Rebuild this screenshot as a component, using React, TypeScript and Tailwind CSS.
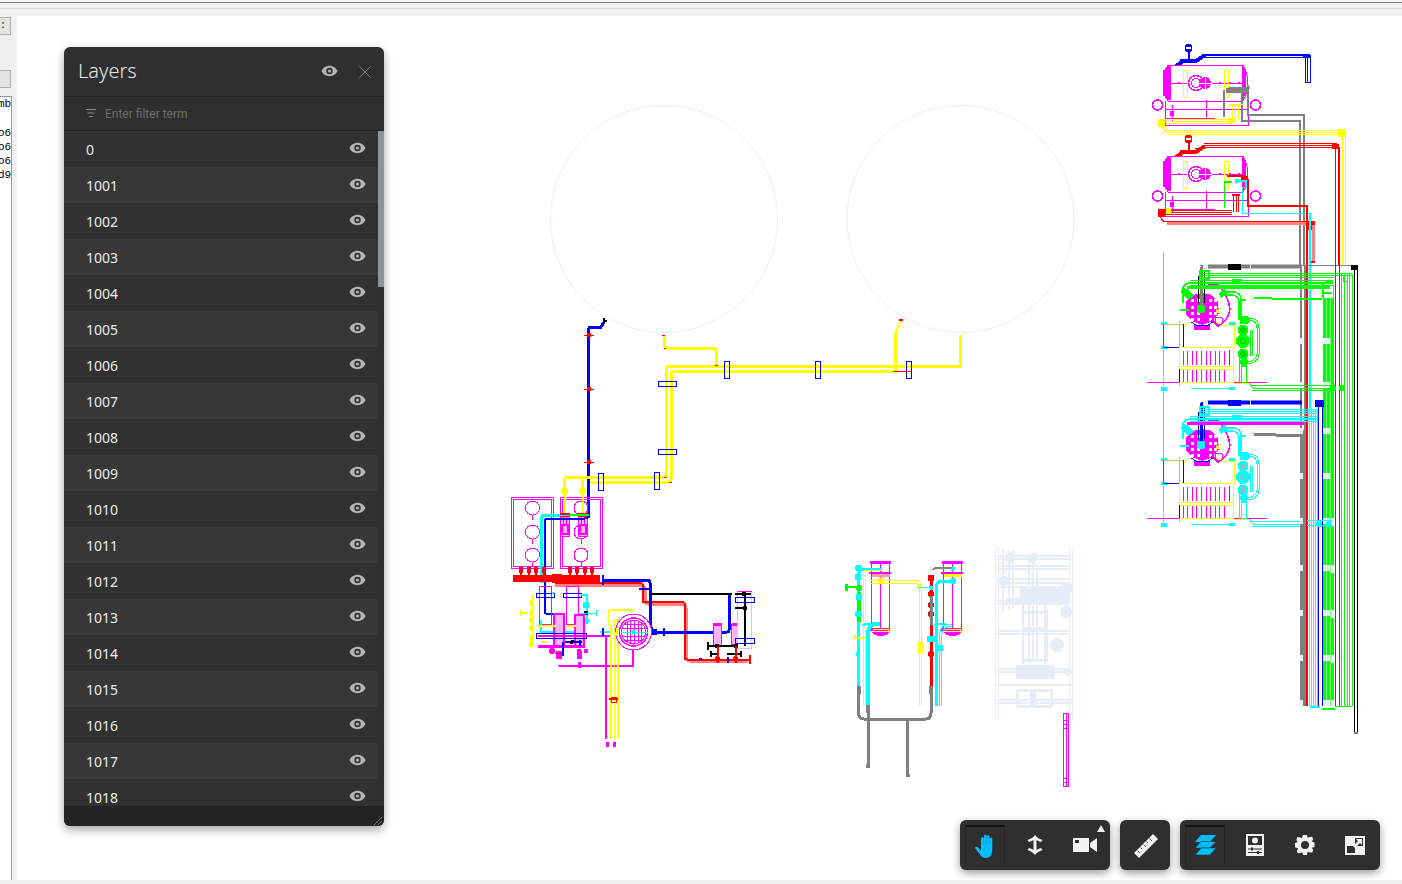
import React from "react";

const Y = "#ffff00", R = "#ff0000", B = "#0000ff", M = "#ff00ff", C = "#00ffff", G = "#00ff00", K = "#000000", A = "#808080", P = "#e6edf9";

type LP = { d: string; c: string; w?: number; o?: number };
const L = ({ d, c, w = 1, o }: LP) => <path d={d} fill="none" stroke={c} strokeWidth={w} opacity={o} />;
const Rc = ({ x, y, w, h, c, s, sw = 1 }: { x: number; y: number; w: number; h: number; c?: string; s?: string; sw?: number }) => (
  <rect x={x} y={y} width={w} height={h} fill={c ?? "none"} stroke={s} strokeWidth={s ? sw : undefined} />
);
const Ci = ({ x, y, r, c, s, sw = 1 }: { x: number; y: number; r: number; c?: string; s?: string; sw?: number }) => (
  <circle cx={x} cy={y} r={r} fill={c ?? "none"} stroke={s} strokeWidth={s ? sw : undefined} />
);
const range = (a: number, b: number, step: number) => {
  const o: number[] = [];
  for (let i = a; i <= b; i += step) o.push(i);
  return o;
};

function LeftPlant() {
  return (
    <g>
      <g shapeRendering="geometricPrecision">
        <Ci x={664} y={219} r={113.5} s={P} />
        <Ci x={960.5} y={219} r={113.5} s={P} />
      </g>
      {/* blue riser */}
      <L d="M588.5 518V331Q588.5 327 591 327H601L604 322" c={B} w={3} />
      <Rc x={602.5} y={318} w={2} h={6} c={K} />
      <Rc x={604} y={320} w={3} h={2} c={K} />
      {[335, 389, 462].map((y) => (
        <g key={y}>
          <L d={`M584 ${y}H594`} c={R} />
          <Rc x={587} y={y - 2} w={4} h={4} c={R} />
        </g>
      ))}
      {/* yellow lines */}
      <L d="M664 335V345Q664 348 667 348H713Q716 348 716 351V365" c={Y} w={3} />
      <L d="M960 335V366H669Q666 366 666 369V474Q666 477 663 477H568Q564 477 564 481V516" c={Y} w={3} />
      <L d="M895 333V371H674Q671 371 671 374V479Q671 482 668 482H590" c={Y} w={3} />
      <L d="M582 477V516" c={Y} w={3} />
      <L d="M895 334L901 321" c={Y} w={2} />
      <Rc x={899} y={319} w={4} h={2} c={R} />
      <Ci x={564.5} y={491} r={3.5} c={Y} />
      <Ci x={582.5} y={491} r={3.5} c={Y} />
      <Rc x={724.5} y={361.5} w={5} h={17} s={B} />
      <Rc x={815.5} y={361.5} w={5} h={17} s={B} />
      <Rc x={906.5} y={361.5} w={5} h={17} s={B} />
      <L d="M893 371H912" c={R} />
      <Rc x={658.5} y={381.5} w={18} h={5} s={B} />
      <Rc x={658.5} y={449.5} w={18} h={5} s={B} />
      <Rc x={654} y={472} w={5} h={17} s={B} />
      <Rc x={598.5} y={473.5} w={5} h={17} s={B} />
      <L d="M662 335h3M664 348h2M715 365h3M664 477h3M669 482h3" c={R} />

      {/* magenta tanks */}
      {[511, 559.5].map((x) => (
        <g key={x}>
          <Rc x={x + 0.5} y={497.5} w={42} h={71} s={M} />
          <Rc x={x + 2.5} y={499.5} w={38} h={67} s={M} />
          {[508, 532, 555].map((y) => (
            <g key={y}>
              <Ci x={x + 21.5} y={y} r={7} c="#fff" s={M} />
              <L d={`M${x + 21.5} ${y + 7}v5`} c={M} />
            </g>
          ))}
        </g>
      ))}
      {/* burners on the tanks */}
      {[560, 578].map((x) => (
        <g key={x}>
          <Rc x={x + 0.5} y={513.5} w={9} h={23} c="#ffb3ff" s={M} sw={1} />
          <Rc x={x + 2} y={525} w={6} h={9} s={M} sw={2} />
          <Rc x={x} y={513} w={10} h={4} c={R} />
          <L d={`M${x + 3} 517v7M${x + 6} 517v7`} c={M} />
          <L d={`M${x + 4.5} 495v18`} c={Y} w={2} />
        </g>
      ))}
      <L d="M541 583V519Q541 515 545 515H560" c={C} w={3} />
      <L d="M560 515H578" c={C} w={1} />
      <L d="M570 515H589" c={G} w={2} />
      <L d="M588.5 516Q588 518 585 518.5H548Q544.5 518.5 544.5 522V612Q544.5 613.5 546 613.5H553" c={B} w={2} />
      {/* red header */}
      {[521, 528.5, 536, 543.5, 569.5, 577, 584.5, 592].map((x) => (
        <g key={x}>
          <Rc x={x - 2} y={567} w={4} h={6} c={R} />
          <Rc x={x - 1} y={573} w={2} h={4} c={R} />
        </g>
      ))}
      <Rc x={513} y={575} w={87} h={7} c={R} />
      <Rc x={552} y={574} w={10} h={9} c={R} />
      <L d="M555 585H640Q644 585 645 589V601Q645 604 648 604H681Q686 604 686 608V656Q686 661 690 661H748" c="#ff8080" w={3} />
      <L d="M555 583H640Q643 583 643 586V602H682Q685 602 685 605V658Q685 659.5 687 659.5H750" c={R} w={2} />
      <L d="M749.5 655V664" c={R} w={2} />
      <L d="M603 580H647Q650 580 650 583V632" c={B} w={3} />
      <L d="M603 575v10" c={B} w={2} />
      <Rc x={639} y={588} w={13} h={2} c={B} />
      <L d="M650 594H732M735 594H744" c={K} w={2} />
      <L d="M729 595V630Q729 632 727 632H655" c={B} w={3} />
      <L d="M645 632L651 622M650 624L654 634" c={B} w={2.5} />
      <Ci x={654} y={632} r={3.5} c={B} />
      <L d="M664 628v8" c={B} w={1.5} />
      <Rc x={713.5} y={624} w={8} h={22} c="#ffb3ff" s={M} />
      <Rc x={731.5} y={624} w={8} h={20} c="#ffb3ff" s={M} />
      <Rc x={713} y={623} w={9} h={3} c={M} />
      <Rc x={732} y={623} w={9} h={3} c={M} />
      <L d="M708 646H745M708 642v8" c={K} w={2} />
      <L d="M711 654H718M711 651v6M741 654H734M741 651v6M735 654h-8" c={K} w={1.2} />
      <Rc x={737.5} y={591} w={14} h={57} c="#fff" s="#f9b3f9" />
      <L d="M738 591H752M745 592V608" c={M} w={1} />
      <L d="M735 594H751M735 608H745" c={K} w={2} />
      <L d="M745 594V646" c={K} w={2} />
      <Ci x={717} y={646} r={2.5} c={K} />
      <Ci x={736} y={646} r={2.5} c={K} />
      <Ci x={744} y={594} r={2.5} c={K} />
      <Ci x={745} y={608} r={2.5} c={K} />
      <Rc x={735.5} y={597.5} w={19} h={5} s={B} />
      <Rc x={735.5} y={638.5} w={19} h={5} s={B} />
      <Ci x={717.5} y={659} r={3} c={R} />
      <Ci x={735.5} y={659} r={3} c={R} />
      <L d="M717.5 646V663M735.5 646V663" c={R} w={2} />
      <L d="M700 660v-2" c={B} w={3} />
      <L d="M728 657v6" c={B} w={2} />

      {/* pumps */}
      <Rc x={539.5} y={586.5} w={12} h={38} s={M} />
      <Rc x={566.5} y={586.5} w={12} h={38} s={M} />
      <Rc x={536.5} y={593} w={18} h={4} s={B} />
      <Rc x={563.5} y={593} w={18} h={4} s={B} />
      <L d="M553 594V592M581 595h6V620" c={C} w={2} />
      <Ci x={586} y={605} r={3.5} c={C} />
      <Ci x={586} y={613} r={2.5} c={K} />
      <L d="M579 613H596M596 610v6" c={C} w={1} />
      <Ci x={586} y={621} r={3} c={C} />
      <L d="M533 595V646" c={Y} w={2} />
      <L d="M520 613H528M521 610v6" c={Y} w={1.5} />
      {[603, 613, 620, 628, 638, 644].map((y) => (
        <Ci key={y} x={531.5} y={y} r={3} c={Y} />
      ))}
      <L d="M541 620V632H580" c={C} w={2} />
      <Rc x={554} y={614} w={10} h={32} c="#ffb3ff" s={M} sw={2} />
      <Rc x={575} y={615} w={9} h={31} c="#ffb3ff" s={M} sw={2} />
      <Rc x={536} y={633} w={50} h={5} s={B} />
      <L d="M538 636H610" c={M} w={2} />
      <L d="M538 646H585" c={M} w={3} />
      <L d="M537 626H555M565 626H576" c={Y} w={1.5} />
      <L d="M541 642h6" c={Y} w={2} />
      <Ci x={552} y={651} r={3} c={M} />
      <Ci x={579} y={651} r={2.5} c={M} />
      <Ci x={586} y={651} r={2.5} c={M} />
      <Rc x={556} y={651} w={6} h={8} c={M} />
      <Rc x={577} y={651} w={5} h={8} c={M} />
      <L d="M555 653h6" c={R} />
      <L d="M563 642v14M580 640v6" c={B} w={1.5} />
      <L d="M565 642H582" c={B} w={1.5} />
      <Ci x={572} y={642} r={2} c={K} />
      <L d="M559 665Q559 666 562 666H633V640" c={M} w={2} />
      <Rc x={578} y={662} w={3} h={6} c={M} />
      <L d="M606 636V739" c={M} w={2} />
      <L d="M608.5 625V612Q608.5 610 611 610H633V612" c={Y} w={1.5} />
      <L d="M611 625V739M618 622V739" c={Y} w={2} />
      <L d="M614.500 620V739M611 622L616 620H622" c={Y} w={1.5} />
      <L d="M609 699H618" c={R} w={1.5} />
      <Rc x={611} y={697} w={5} h={5} s={R} />
      <Rc x={606} y={742} w={3} h={5} c={M} />
      <Rc x={613} y={742} w={3} h={5} c={M} />
      <Ci x={633.5} y={632} r={18} c="#fff" s={M} />
      <Ci x={633.5} y={632} r={14} s={M} sw={1.5} />
      <Ci x={633.5} y={632} r={12} s={M} />
      <L d="M625 624H642M622 628H645M622 632H645M622 636H645M625 640H642M627 622V642M630 621V643M634 620V644M638 621V643M641 622V642" c={M} w={1} />
      <L d="M621 632H648" c={C} w={1} />
      <Ci x={633.5} y={632} r={2} c={C} />
      <L d="M600 632H610" c={C} w={1.5} />
      <L d="M603 628v8" c={B} w={1.5} />
      <L d="M618 628L614 640" c={Y} w={2} />
    </g>
  );
}

function MiddlePlant() {
  return (
    <g>
      {[870, 942].map((x, i) => (
        <g key={x}>
          <Rc x={x} y={561} w={21} h={3} c={M} />
          <L d={`M${x + 1.5} 564V630M${x + 19.5} 564V630`} c={M} />
          <L d={`M${x + 10.5} 564V630`} c={M} w={1} />
          <Rc x={x + 2} y={573} w={18} h={3.5} c={i ? Y : "#f9a"} />
          <Rc x={x - 1} y={572} w={22} h={2} c={M} />
          <Rc x={x - 1} y={628} w={21} h={3} c={M} />
          <Rc x={x + 3} y={629} w={15} h={2.5} s={Y} />
          <path d={`M${x + 2} 632H${x + 19}Q${x + 17} 636 ${x + 10.5} 636Q${x + 4} 636 ${x + 2} 632Z`} fill={M} />
          <L d={`M${x - 7} 626Q${x - 7} 624 ${x - 2} 624H${x + 4}`} c={C} w={2.5} />
        </g>
      ))}
      <L d="M858 686V578Q858 569 864 569H882" c={C} w={3} />
      <L d="M863 706V574Q863 570 868 570H882M865 706V574" c={Y} w={1} />
      <L d="M868 706V635Q868 625 874 624H880" c={C} w={4} />
      <L d="M871 580H918Q921 582 921 587V706M871 583H916Q919 584 919 589V706" c={Y} w={1} />
      <Ci x={881} y={581} r={3.5} c={Y} />
      <Ci x={858.5} y={568} r={3.5} c={C} />
      <Ci x={858} y={577} r={3.5} c={C} />
      <L d="M846 587H858" c={G} w={1.5} />
      <Rc x={845} y={584} w={3} h={7} c={G} />
      <Ci x={859} y={588} r={3} c={G} />
      <Rc x={857} y={592} w={4} h={30} c={G} />
      <Ci x={859} y={597} r={3.5} c={C} />
      <Ci x={858.5} y={614} r={3.5} c={C} />
      <Rc x={855} y={637} w={10} h={2} c={Y} />
      <L d="M855 635v4" c={Y} w={2} />
      <Ci x={858} y={654} r={2.5} c={C} />
      <L d="M866 645H870" c={C} w={4} />
      <Rc x={918} y={642} w={5} h={11} c={Y} />
      <L d="M931 686V578" c={R} w={3} />
      <Ci x={931} y={578} r={3.5} c={R} />
      <Ci x={931} y={594} r={3} c={R} />
      <Ci x={931} y={605} r={3} c={R} />
      <Ci x={931} y={614} r={3} c={R} />
      <Ci x={931} y={654} r={3} c={R} />
      <L d="M931 596V625" c={A} w={3} />
      <L d="M931 566V574" c={P} w={2} />
      <L d="M933 570Q934 568 937 568H952" c={A} w={2} />
      <Ci x={953} y={569} r={2} c={C} />
      <L d="M936 706V590Q936 581 941 581H953" c={C} w={3} />
      <Ci x={953} y={581} r={3} c={C} />
      <L d="M939 706V640Q939 627 946 624H952M941 706V642Q941 629 948 626H952" c={C} w={1} />
      <L d="M918 587H930" c={C} w={1} />
      <Rc x={929} y={586} w={4} h={4} c={C} />
      <Rc x={927} y={636} w={8} h={6} c={C} />
      <Rc x={937} y={645} w={6} h={6} c={C} />
      <L d="M858.5 686V713Q858.5 719 864 719H926Q931 719 931 713V686" c={A} w={3} />
      <L d="M868 706V766" c={A} w={3} />
      <L d="M907.5 719V776" c={A} w={3} />
      <Rc x={866} y={764} w={4} h={4} c={A} />
      <Rc x={906} y={774} w={4} h={3} c={A} />
      <Rc x={857} y={686} w={4} h={8} c={A} />
      <Rc x={866} y={705} w={4} h={8} c={A} />
      <Rc x={929} y={686} w={4} h={8} c={A} />
      {/* ghost plant */}
      <g>
        <Rc x={995} y={547} w={3} h={171} s={P} />
        <Rc x={1069} y={547} w={3} h={171} s={P} />
        <L d="M997 556H1070M997 559H1070M997 566H1070M997 569H1070M997 579H1070M997 583H1070M997 587H1070M997 601H1070M997 604H1070M997 631H1070M997 634H1070M997 669H1070M997 672H1072M997 685H1072M997 700H1072M997 703H1072" c={P} w={2} />
        <L d="M1003 550V612M1009 550V610M1013 550V608M1029 560V660M1033 560V660M1037 570V660M1023 600V664M1045 600V664" c={P} w={2} />
        <L d="M1024 660H1046V610M1024 612H1044M1024 628H1044" c={P} w={3} />
        <Rc x={1016} y={665} w={38} h={13} c={P} s={P} />
        <Rc x={1017} y={690} w={34} h={16} s={P} sw={3} />
        <Rc x={1030} y={690} w={6} h={16} c={P} />
        <Ci x={1010} y={558} r={5} c={P} />
        <Ci x={1033} y={558} r={5} c={P} />
        <Ci x={1004} y={581} r={5} c={P} />
        <Ci x={1067} y={588} r={6} c={P} />
        <Ci x={1066} y={612} r={6} c={P} />
        <Ci x={1057} y={645} r={7} c={P} />
        <Ci x={1068} y={672} r={4} c={P} />
        <Rc x={1020} y={588} w={48} h={14} c={P} s={P} />
        <Rc x={1005} y={598} w={18} h={6} c={P} />
      </g>
      <Rc x={1063.5} y={713.5} w={5} h={73} s={M} />
      <L d="M1066 714V786" c={M} />
      <L d="M1064 720H1068M1064 724H1068M1064 728H1068M1064 778H1068M1064 782H1068" c={M} />
    </g>
  );
}

function Boiler({ dy, top }: { dy: number; top: string }) {
  const y = (n: number) => n + dy;
  return (
    <g>
      <Ci x={1188.5} y={y(48)} r={3.5} c={top} s={top} sw={1} />
      <Rc x={1186} y={y(47)} w={5} h={2} c="#fff" />
      <L d={`M1188.5 ${y(51)}V${y(62)}`} c={top} w={2} />
      <L d={`M1180 ${y(61)}H1196L1205 ${y(55)}`} c={top} w={4} />
      <Ci x={1178.5} y={y(67)} r={4} c={top} />
      <L d={`M1179 ${y(64)}L1185 ${y(60)}`} c={top} w={4} />
      <path d={`M1168 ${y(65)}H1243Q1248 ${y(75)} 1248 ${y(83)}Q1248 ${y(92)} 1243 ${y(101)}H1168Q1163 ${y(92)} 1163 ${y(83)}Q1163 ${y(75)} 1168 ${y(65)}Z`} fill="#fff" stroke={M} strokeWidth={1} />
      <L d={`M1164 ${y(70)}V${y(96)}M1166 ${y(68)}V${y(98)}M1168 ${y(66)}V${y(100)}M1245 ${y(70)}V${y(96)}M1243 ${y(66)}V${y(100)}M1170 ${y(66)}V${y(100)}`} c={M} w={1.5} />
      <L d={`M1170 ${y(83)}H1187M1212 ${y(83)}H1246`} c={M} />
      {[1178, 1219, 1229, 1238].map((x) => (
        <Rc key={x} x={x} y={y(82)} w={2} h={2} c={M} />
      ))}
      <Rc x={1183.5} y={y(70)} w={4} h={27} s={Y} />
      <Rc x={1224.5} y={y(70)} w={4} h={27} s={Y} />
      <Ci x={1196} y={y(83)} r={7.5} s={M} sw={1.5} />
      <Ci x={1196} y={y(83)} r={4.5} s={M} />
      <Ci x={1205} y={y(83)} r={6} c={M} />
      <L d={`M1199 ${y(83)}H1211M1205 ${y(77)}V${y(89)}`} c="#fff" />
      <L d={`M1165 ${y(101)}V${y(125)}H1248V${y(101)}M1165 ${y(109)}H1248M1165 ${y(118)}H1215`} c={M} />
      <Ci x={1157.5} y={y(105)} r={5} s={M} sw={1.5} />
      <Ci x={1255.5} y={y(105)} r={5} s={M} sw={1.5} />
      <L d={`M1206 ${y(100)}V${y(120)}M1172 ${y(105)}V${y(122)}`} c={M} />
      <Rc x={1170} y={y(111)} w={4} h={5} c={M} />
    </g>
  );
}

function Unit({ dy, c, head, tail }: { dy: number; c: string; head: string; tail: string }) {
  const y = (n: number) => n + dy;
  const end = dy ? 1300 : 1333;
  const far = dy ? 1318 : 1352;
  const mid = dy ? 1318 : 1333;
  return (
    <g>
      <L d={`M1163.5 ${y(252)}V${y(386)}`} c={C} />
      <L d={`M1179 ${y(321)}V${y(386)}`} c={C} />
      <L d={`M1147 ${y(382.5)}H1267`} c={M} />
      <Rc x={1161} y={y(322)} w={6} h={3} c={C} />
      <Rc x={1161} y={y(346)} w={6} h={3} c={C} />
      <Rc x={1161} y={y(387)} w={6} h={4} c={C} />
      <Rc x={1229} y={y(322)} w={6} h={3} c={C} />
      <Rc x={1229} y={y(387)} w={6} h={3} c={C} />
      <L d={`M1191 ${y(388.5)}H1235`} c={C} />
      <L d={`M1163.5 ${y(324)}H1183`} c="#d8c850" />
      <L d={`M1163.5 ${y(324)}V${y(347)}`} c="#505070" />
      <L d={`M1163.5 ${y(347)}H1183V${y(324)}`} c={B} />
      <Rc x={1179.5} y={y(347.5)} w={54} h={35} s={Y} />
      <L d={`M1179 ${y(366)}H1234M1179 ${y(369)}H1234`} c={Y} />
      <L d={range(1183, 1228, 4.6).map((x) => `M${x} ${y(351)}V${y(365)}M${x} ${y(370)}V${y(382)}`).join("")} c={M} />
      <L d={`M1179 ${y(369)}V${y(382)}`} c={B} />
      <L d={`M1229 ${y(350)}V${y(365)}`} c="#4040c0" />
      <L d={`M1233 ${y(350)}V${y(366)}H1229`} c={Y} />
      <L d={`M1233 ${y(383)}H1250`} c={Y} />
      {/* burner */}
      <L d={`M1188 ${y(322)}L1184 ${y(327)}M1216 ${y(322)}L1220 ${y(325)}H1234V${y(347)}`} c={Y} />
      <path d={`M1193 ${y(295)}L1202 ${y(293)}L1212 ${y(295)}L1218 ${y(302)}L1219 ${y(313)}L1213 ${y(321)}L1202 ${y(325)}L1192 ${y(321)}L1186 ${y(314)}L1186 ${y(301)}Z`} fill={M} />
      {[1191, 1197, 1209, 1214].flatMap((x) =>
        [299, 306, 312, 318].map((v) => <Rc key={`${x}-${v}`} x={x} y={y(v)} w={3} h={3} c="#fff" />)
      )}
      <Rc x={1194} y={y(325)} w={16} h={5} c={M} />
      <L d={`M1191 ${y(322)}L1196 ${y(325)}H1208L1213 ${y(322)}`} c={B} />
      <path d={`M1202 ${y(283)}L1218 ${y(285)}Q1228 ${y(295)} 1230 ${y(309)}Q1228 ${y(322)} 1218 ${y(326)}L1212 ${y(320)}`} fill="none" stroke={M} strokeWidth={1.5} />
      <Ci x={1219} y={y(321)} r={4} s={M} />
      <Ci x={1218} y={y(311)} r={2} c={Y} />
      {/* head pipe */}
      <L d={`M1203 ${y(267)}Q1201 ${y(267)} 1201 ${y(272)}V${y(310)}`} c={head} w={3} />
      <L d={`M1198 ${y(276)}V${y(303)}M1204 ${y(272)}V${y(303)}`} c={head === A ? K : B} />
      <L d={`M1208 ${y(266.5)}H1302`} c={head} w={3} />
      <L d={`M1208 ${y(264.5)}H1302M1208 ${y(268.5)}H1302`} c={head} o={0.5} />
      <Rc x={1228} y={y(264)} w={13} h={6} c={head === A ? K : B} />
      <Rc x={1203} y={y(264)} w={5} h={6} c={P} />
      <Rc x={1250} y={y(262)} w={1} h={14} c={P} />
      {/* burner piping */}
      <L d={`M1200 ${y(273)}H${far}M1200 ${y(275)}H${far}M1200 ${y(277)}H${mid}`} c={c} />
      <L d={`M1190 ${y(280)}H${mid}M1190 ${y(285)}H${mid}`} c={c} />
      <L d={`M1190 ${y(282.5)}H${mid}`} c={c} w={2} />
      <Rc x={1200} y={y(271)} w={9} h={8} s={c} sw={2} />
      <Rc x={1232} y={y(279)} w={10} h={5} c={c} />
      <L d={`M1183 ${y(303)}V${y(288)}Q1184 ${y(284)} 1190 ${y(283)}`} c={c} w={2} />
      <L d={`M1187 ${y(287.5)}H${dy ? 1304 : 1330}`} c={dy ? M : c} w={3} />
      <path d={`M1182 ${y(288)}L1188 ${y(289)}L1194 ${y(296)}L1188 ${y(300)}L1181 ${y(293)}Z`} fill={c} />
      <L d={`M1220 ${y(296)}L1226 ${y(291)}`} c={c} w={5} />
      <Ci x={1201} y={y(309)} r={4.5} c={c} />
      <Rc x={1180} y={y(309)} w={9} h={2} c={c} />
      {/* riser with the rings */}
      <L d={`M1222 ${y(292)}H1233Q1241 ${y(292)} 1241 ${y(300)}V${y(320)}M1222 ${y(295)}H1231Q1239 ${y(295)} 1239 ${y(303)}V${y(320)}M1241 ${y(300)}H1246`} c={c} w={1.5} />
      <L d={`M1241 ${y(350)}V${y(383)}M1239 ${y(350)}V${y(383)}M1246 ${y(350)}V${y(383)}`} c={c} />
      <L d={`M1247 ${y(320)}H1251Q1257 ${y(322)} 1257 ${y(328)}V${y(354)}Q1257 ${y(358)} 1251 ${y(361)}H1247M1247 ${y(318)}H1252Q1259 ${y(320)} 1259 ${y(328)}V${y(354)}Q1259 ${y(360)} 1252 ${y(363)}H1247M1252 ${y(330)}V${y(356)}M1250 ${y(330)}V${y(356)}`} c={c} />
      <Rc x={1240} y={y(316)} w={6} h={8} c={c} />
      {[[1246, 320, 4], [1243, 330, 5.5], [1243, 341, 7], [1243, 354, 5.5], [1244, 362, 4]].map(([x, v, r]) => (
        <g key={v}>
          <Ci x={x} y={y(v)} r={r} c={c} />
          {r > 5 && <Ci x={x} y={y(v)} r={r / 2.6} s={dy ? "#b0b0b0" : "#00c000"} />}
        </g>
      ))}
      <Rc x={1241} y={y(366)} w={5} h={16} s={c} />
      <L d={`M1250 ${y(383)}Q1250 ${y(386)} 1253 ${y(388)}H${end}M1252 ${y(385)}H${end}M1252 ${y(390)}H${end}`} c={c} />
      <L d={`M1251 ${y(298)}H1268L1276 ${y(299)}H${dy ? 1300 : 1322}`} c={tail} w={dy ? 3 : 2} />
      <Rc x={1250} y={y(295)} w={4} h={5} c={P} />
    </g>
  );
}

function RightPlant() {
  const ticks = [338, 382, 428, 473, 518, 565, 610, 655, 700];
  return (
    <g>
      <Boiler dy={0} top={B} />
      <Boiler dy={91} top={R} />
      {/* boiler 1 piping */}
      <L d="M1203 54H1305M1195 60L1203 55H1305M1203 57H1305" c={B} />
      <Rc x={1305} y={55} w={5} h={27} s={B} sw={1} />
      <L d="M1307.500 58V82" c={B} />
      <Rc x={1303} y={54} w={7} h={4} c={B} />
      <Rc x={1226} y={88} w={22} h={5} c={A} />
      <L d="M1224 90V117M1229 88H1250" c={A} w={1.5} />
      <L d="M1248 85V115H1304V265" c={A} w={2} />
      <L d="M1242 88V121H1300V265" c={A} w={2} />
      <L d="M1232 104H1243" c={Y} />
      <Rc x={1229} y={104} w={8} h={2} c={Y} />
      <L d="M1232 105V120M1235 105V120M1238 105V120" c={Y} />
      <L d="M1162 119H1232M1162 121H1232M1166 123H1232" c={Y} />
      <Rc x={1158} y={119} w={7} h={8} c={Y} />
      <Rc x={1167} y={119} w={4} h={4} c={P} />
      <Rc x={1228} y={118} w={8} h={5} c={Y} />
      <L d="M1162 126Q1163 132 1167 132H1343M1164 126Q1165 130 1168 130H1343M1168 134H1342" c={Y} />
      <Rc x={1338} y={129} w={8} h={8} c={Y} />
      <L d="M1342 134V265M1345 134V265" c={Y} />
      {/* boiler 2 piping */}
      <L d="M1195 151L1204 145H1337M1195 149L1204 147H1337M1204 143H1337" c={R} />
      <Rc x={1332} y={144} w={7} h={5} c={R} />
      <L d="M1335 147V265M1338 147V265" c={R} />
      <L d="M1228 177V176H1245M1248 179V206H1307V250" c={R} w={2} />
      <Rc x={1241} y={176} w={7} h={4} c={R} />
      <L d="M1224 182H1232" c={G} w={2} />
      <L d="M1224 182V208" c={G} />
      <L d="M1236 181H1246V187" c={C} w={2} />
      <Ci x={1237} y={181} r={2.5} c={C} />
      <L d="M1242 187V213H1310V265" c={C} />
      <Rc x={1232} y={194} w={8} h={2} c={R} />
      <L d="M1233 196V212M1236 196V212M1238 196V212" c={R} />
      <L d="M1160 210H1232M1160 212H1232M1166 214H1232" c={R} />
      <Rc x={1158} y={209} w={7} h={8} c={R} />
      <Rc x={1166} y={208} w={5} h={6} c={Y} />
      <L d="M1160 214Q1161 222 1167 222H1308" c={R} />
      <L d="M1167 223H1308" c="#ff8080" w={4} />
      <L d="M1167 221H1308" c={R} />
      <Rc x={1307} y={221} w={8} h={9} c={R} />
      <L d="M1313 225V262" c="#ff8080" w={3} />
      <Rc x={1311} y={261} w={4} h={2} c={R} />
      {/* long risers */}
      <L d="M1301 265V430M1304.500 265V430" c={A} w={2} />
      <Rc x={1300} y={430} w={6} h={276} c={A} />
      <L d="M1307 206V706" c={R} w={2} />
      <L d="M1310 213V410" c={C} w={2} />
      {ticks.map((v) => (
        <Rc key={v} x={1300} y={v} w={3} h={6} c={P} />
      ))}
      {/* black + green run */}
      <L d="M1354.5 268V733M1357.5 268V733" c={K} />
      <L d="M1354 733H1358" c={A} w={2} />
      <L d="M1200 265H1358" c={A} />
      <L d="M1335.500 147V706M1339 147V706" c={R} />
      <L d="M1335 706H1352" c={G} />
      <L d="M1341 274V706M1344 274V706M1347 274V706M1349.500 274V706M1352 274V706" c={G} />
      <Rc x={1343} y={275} w={4} h={6} s={G} />
      <Rc x={1351} y={265} w={7} h={5} c={K} />
      {/* green band */}
      <Rc x={1323} y={298} w={10} h={408} c={G} />
      <L d="M1326 298V706M1330 298V706" c="#80ff80" />
      <L d="M1333 285V706" c={G} />
      <Rc x={1322} y={708} w={13} h={2} c={G} />
      {/* blue + cyan on lower half */}
      <L d="M1318 400V706M1322 400V706" c={B} />
      <Rc x={1315} y={400} w={9} h={7} c={B} />
      <L d="M1309 410V706M1311 410V706M1313 410V706M1315 410V706M1317 410V706" c={C} w={1} />
      <Rc x={1310} y={706} w={10} h={2} c={C} />
      {ticks.map((v) => (
        <Rc key={v} x={1323} y={v} w={7} h={6} c={P} />
      ))}
      {ticks.slice(4).map((v) => (
        <Rc key={v} x={1331} y={v} w={3} h={8} c={P} />
      ))}
      <Unit dy={0} c={G} head={A} tail={G} />
      <Unit dy={136} c={C} head={B} tail={A} />
      {/* collectors */}
      <Ci x={1333} y={388} r={3} c={G} />
      <Ci x={1342} y={388} r={3} c={G} />
      <Ci x={1319} y={524} r={3} c={C} />
      <Ci x={1329} y={524} r={3} c={C} />
      <L d="M1307 520H1332M1307 525H1332" c={C} />
      <L d="M1322 293H1332M1323 298V283L1333 281" c={G} w={2} />
    </g>
  );
}

const Eye = ({ className }: { className: string }) => (
  <svg viewBox="0 0 18 12" className={className} fill="currentColor">
    <path fillRule="evenodd" d="M9 .5C5 .5 1.8 3 .5 6c1.3 3 4.500 5.500 8.500 5.500S16.200 9 17.500 6C16.200 3 13 .5 9 .5ZM9 2.600a3.400 3.400 0 1 1 0 6.800 3.400 3.400 0 0 1 0-6.800Z" />
    <circle cx="9" cy="6" r="1.700" />
  </svg>
);

const layers = ["0", ...range(1001, 1018, 1).map(String)];

function LayersPanel() {
  return (
    <div className="absolute left-[47px] top-[31px] flex h-[779px] w-[320px] flex-col overflow-hidden rounded-[6px] bg-[#2f2f2f] shadow-[0_4px_10px_rgba(0,0,0,0.35)] font-['Noto_Sans',sans-serif]">
      <div className="flex h-[50px] shrink-0 items-center border-b border-[#242424] pl-[14px] pr-[13px]">
        <span className="mb-[2px] flex-1 text-[20px] font-light leading-none text-[#e8e8e8]">Layers</span>
        <Eye className="mb-[2px] mr-[21px] h-[12px] w-[17px] text-[#b4b4b4]" />
        <svg viewBox="0 0 12 12" className="h-[12px] w-[12px] text-[#8c8c8c]" fill="none" stroke="currentColor" strokeWidth="0.9">
          <path d="M.5.500l11 11M11.500.500l-11 11" />
        </svg>
      </div>
      <div className="flex h-[34px] shrink-0 items-center border-b border-[#222222] pl-[22px]">
        <svg viewBox="0 0 10 8" className="mr-[9px] mb-[2px] h-[8px] w-[10px] text-[#8a8a8a]" fill="none" stroke="currentColor" strokeWidth="1">
          <path d="M0 .500h10M1.500 4h7M3 7.500h4" />
        </svg>
        <span className="font-['Roboto',sans-serif] text-[12px] text-[#6d6d6d]">Enter filter term</span>
      </div>
      <div className="relative min-h-0 flex-1 overflow-hidden bg-[#303030] pr-[6px]">
        {layers.map((name, i) => (
          <div key={name} className={`flex h-[36px] items-center justify-between pl-[22px] pr-[12px] ${i % 2 ? "bg-[#373737]" : "bg-[#313131]"}`}>
            <span className="pt-[2px] text-[14px] leading-none text-[#ececec]">{name}</span>
            <Eye className="mb-[3px] h-[12px] w-[17px] text-[#b4b4b4]" />
          </div>
        ))}
        <div className="absolute right-0 top-0 h-[156px] w-[6px] bg-[#8e949c]" />
      </div>
      <div className="relative h-[20px] shrink-0 bg-[#232323]">
        <svg viewBox="0 0 8 8" className="absolute bottom-[1px] right-[2px] h-[8px] w-[8px] text-[#9a9a9a]" fill="none" stroke="currentColor" strokeWidth="0.7">
          <path d="M0 8L8 0M4 8L8 4" />
        </svg>
      </div>
    </div>
  );
}

function Hand() {
  return (
    <svg viewBox="0 0 21 24" className="mt-[2px] h-[24px] w-[21px]" fill="#00bfff">
      <path d="M6 13V4.500a1.300 1.300 0 0 1 2.600 0V10h.3V2a1.300 1.300 0 0 1 2.600 0v8h.3V2.500a1.300 1.300 0 0 1 2.600 0V10h.3V5a1.300 1.300 0 0 1 2.600 0v11c0 5-2.700 8-6.500 8-3 0-4.700-1.500-6-4L.4 14.500c-.8-1.300.9-2.500 2-1.400L6 16.500Z" />
    </svg>
  );
}
const ToolBtn = ({ active, children }: { active?: boolean; children: React.ReactNode }) => (
  <div className="relative flex h-[50px] w-[50px] items-center justify-center">
    {active && <div className="absolute left-[5px] top-[5px] h-[40px] w-[40px] border-l border-r border-t-2 border-l-[#262626] border-r-[#262626] border-t-[#141414]" />}
    <span className="relative flex">{children}</span>
  </div>
);
const ToolGroup = ({ children }: { children: React.ReactNode }) => (
  <div className="flex rounded-[6px] bg-[#2f2f2f] shadow-[0_3px_8px_rgba(0,0,0,0.4)]">{children}</div>
);

function Toolbar() {
  return (
    <div className="absolute left-[943px] top-[804px] flex gap-[10px]">
      <ToolGroup>
        <ToolBtn active><Hand /></ToolBtn>
        <ToolBtn>
          <svg viewBox="0 0 16 20" className="h-[20px] w-[16px]" fill="#f2f2f2">
            <path d="M8 0C9.500 2 12 4 15.500 5L14 7C12.500 6.500 11 6 9.500 5V15C11 14 12.500 13.500 14 13L15.500 15C12 16 9.500 18 8 20 6.500 18 4 16 .5 15L2 13C3.500 13.500 5 14 6.500 15V5C5 6 3.500 6.500 2 7L.5 5C4 4 6.500 2 8 0Z" />
          </svg>
        </ToolBtn>
        <ToolBtn>
          <svg viewBox="0 0 24 14" className="h-[14px] w-[24px]" fill="#f2f2f2">
            <path fillRule="evenodd" d="M0 0h16v14H0ZM2 2v3h4V2Z" />
            <path d="M17 5l7-5v14l-7-5Z" />
          </svg>
          <svg viewBox="0 0 8 7" className="absolute left-[24px] top-[-13px] h-[7px] w-[8px]" fill="#f2f2f2">
            <path d="M4 0l4 7H0Z" />
          </svg>
        </ToolBtn>
      </ToolGroup>
      <ToolGroup>
        <ToolBtn>
          <svg viewBox="0 0 26 26" className="ml-[2px] mt-[2px] h-[26px] w-[26px]">
            <path d="M1 20L20 1l5 5L6 25Z" fill="#f2f2f2" />
            <path d="M4.500 17.500l2.500 2.500M7.500 14.500l1.500 1.500M10.500 11.500l2.500 2.500M13.500 8.500l1.500 1.500M16.500 5.500l2.500 2.500" stroke="#2f2f2f" strokeWidth="0.8" />
          </svg>
        </ToolBtn>
      </ToolGroup>
      <ToolGroup>
        <ToolBtn active>
          <svg viewBox="0 0 21 20" className="h-[20px] w-[21px]" fill="#00bfff">
            <path d="M6 0h15l-6 7H0Z" />
            <path d="M6 6.500h15l-6 6.500H0Z" stroke="#2f2f2f" strokeWidth="0.6" />
            <path d="M6 13h15l-6 7H0Z" stroke="#2f2f2f" strokeWidth="0.6" />
          </svg>
        </ToolBtn>
        <ToolBtn>
          <svg viewBox="0 0 18 22" className="h-[22px] w-[18px]" fill="#f2f2f2">
            <path fillRule="evenodd" d="M0 0h18v22H0ZM2 2v9h14V2Z" />
            <circle cx="9" cy="6.500" r="3" />
            <path d="M2 15h14M2 18.500h14" stroke="#2f2f2f" strokeWidth="1" />
            <path d="M6 13.500v3M12 17v3" stroke="#2f2f2f" strokeWidth="2" />
          </svg>
        </ToolBtn>
        <ToolBtn>
          <svg viewBox="0 0 20 20" className="h-[20px] w-[20px]" fill="#f2f2f2">
            <path fillRule="evenodd" d="M8 0h4l.7 2.800 2-.9 2.600-.1.900 2.800-1.500 2 2.800.9v4.400l-2.800.9 1.500 2-.9 2.800-2.600-.1-2-.9L12 20H8l-.7-2.800-2 .9-2.600.1-.9-2.800 1.500-2L0 12.300V7.900l2.800-.9-1.500-2 .9-2.800 2.600.1 2 .9ZM10 6a4 4 0 1 0 0 8 4 4 0 0 0 0-8Z" />
          </svg>
        </ToolBtn>
        <ToolBtn>
          <svg viewBox="0 0 20 19" className="mt-[1px] h-[19px] w-[20px]">
            <path d="M0 0h20v19H0Z" fill="#f2f2f2" />
            <path d="M10 2h8v8h-8Z" fill="#2f2f2f" />
            <path d="M2 10h8v7H2Z" fill="#2f2f2f" />
            <path d="M11 3h6v6l-2-2-5 5-2-2 5-5Z" fill="#f2f2f2" />
          </svg>
        </ToolBtn>
      </ToolGroup>
    </div>
  );
}

function Sidebar() {
  return (
    <div className="flex w-[17px] shrink-0 flex-col items-start pt-[1px] font-['Liberation_Mono',monospace] text-[11px]">
      <div className="flex h-[18px] w-[11px] items-center overflow-hidden border border-l-0 border-[#b0b0b0] bg-[#e4e4e4] text-[10px] leading-none text-[#222]">:</div>
      <div className="mt-[35px] h-[18px] w-[11px] border border-l-0 border-[#b0b0b0] bg-[#e4e4e4]" />
      <div className="mt-[8px] min-h-0 w-[12px] flex-1 overflow-hidden border border-l-0 border-b-0 border-[#9a9aa2] bg-white font-['Liberation_Mono',monospace] leading-[14px] text-black">
        <div className="ml-[-2px] whitespace-nowrap">mb</div>
        <div className="ml-[-2px] mt-[15px] whitespace-nowrap leading-[14px]">o6</div>
        <div className="ml-[-2px] whitespace-nowrap leading-[14px]">o6</div>
        <div className="ml-[-2px] whitespace-nowrap leading-[14px]">o6</div>
        <div className="ml-[-2px] whitespace-nowrap leading-[14px]">d9</div>
      </div>
    </div>
  );
}

export default function App() {
  return (
    <div className="flex h-[884px] w-[1402px] flex-col overflow-hidden bg-[#f0f0f0]">
      <div className="h-[16px] shrink-0">
        <div className="h-[2px] bg-[#f4f4f4]" />
        <div className="h-[1px] bg-[#808080]" />
        <div className="mt-[5px] h-[1px] bg-[#dcdcdc]" />
      </div>
      <div className="flex min-h-0 flex-1">
        <Sidebar />
        <div className="relative h-[864px] flex-1 bg-white">
          <svg width="1385" height="864" viewBox="17 16 1385 864" className="block" shapeRendering="crispEdges">
            <LeftPlant />
            <MiddlePlant />
            <RightPlant />
          </svg>
          <LayersPanel />
          <Toolbar />
        </div>
      </div>
      <div className="h-[4px] shrink-0" />
    </div>
  );
}
